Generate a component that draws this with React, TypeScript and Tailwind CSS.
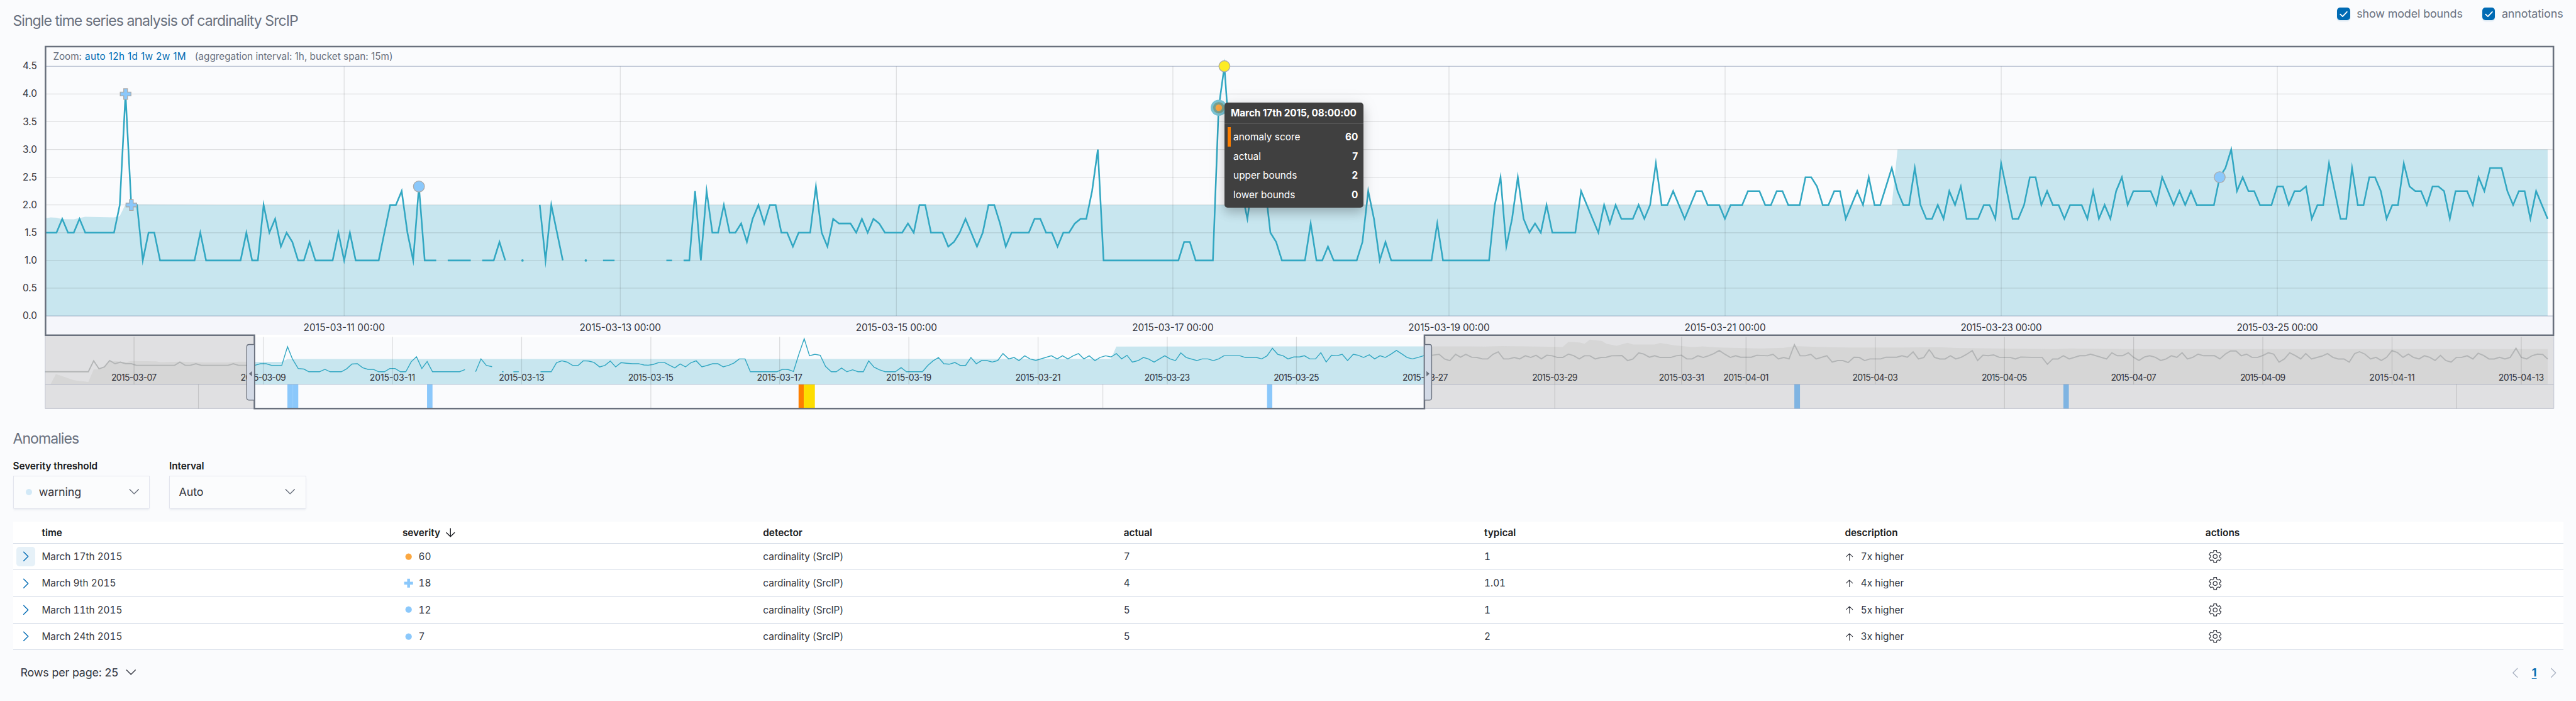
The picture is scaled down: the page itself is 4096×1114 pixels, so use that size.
import React from "react";

/* ---------- main chart data: [hour index, value, ...] per unbroken run ---------- */

const T = 1 / 3;
const RUNS: number[][] = [
  [0, 1.5, 2, 1.5, 3, 1.75, 4, 1.5, 5, 1.5, 6, 1.75, 7, 1.5, 12, 1.5, 13, 2, 14, 4, 15, 2, 16, 2, 17, 1, 18, 1.5, 19, 1.5, 20, 1, 26, 1, 27, 1.5, 28, 1, 34, 1, 35, 1.5, 36, 1, 37, 1, 38, 2, 39, 1.5, 40, 1.75, 41, 1.25, 42, 1.5, 43, 1 + T, 44, 1, 45, 1, 46, 1 + T, 47, 1, 50, 1, 51, 1.5, 52, 1, 53, 1.5, 54, 1, 58, 1, 59, 1.5, 60, 2, 61, 2, 62, 2.25, 63, 1.5, 64, 1, 65, 2 + T, 66, 1, 68, 1],
  [70, 1, 74, 1],
  [76, 1, 78, 1, 79, 1 + T, 80, 1],
  [86, 2, 87, 1, 88, 2, 89, 1.5, 90, 1],
  [97, 1, 99, 1],
  [108, 1, 109, 1],
  [111, 1, 112, 1, 113, 2.25, 114, 1, 115, 2.25, 116, 1.5, 117, 1.5, 118, 2, 119, 1.5, 120, 1.5, 121, 2 - T, 122, 1 + T, 123, 1.75, 124, 2, 125, 2 - T, 126, 2, 127, 2, 128, 1.5, 129, 1.5, 130, 1.25, 131, 1.5, 133, 1.5, 134, 2 + T, 135, 1.5, 136, 1.25, 137, 1.75, 138, 2 - T, 140, 2 - T, 141, 1.5, 142, 1.75, 143, 1.5, 144, 1.75, 145, 2 - T, 146, 1.5, 149, 1.5, 150, 2 - T, 151, 1.5, 152, 2, 153, 2, 154, 1.5, 156, 1.5, 157, 1.25, 158, 1 + T, 159, 1.5, 160, 1.75, 161, 1.5, 162, 1.25, 163, 1.5, 164, 2, 165, 2, 166, 2 - T, 167, 1.25, 168, 1.5, 171, 1.5, 172, 1.75, 173, 1.75, 174, 1.5, 175, 1.5, 176, 1.25, 177, 1.5, 178, 1.5, 179, 2 - T, 180, 1.75, 181, 1.75, 182, 2.25, 183, 3, 184, 1, 197, 1, 198, 1 + T, 199, 1 + T, 200, 1, 203, 1, 204, 3.75, 205, 4.5, 206, 3, 207, 2.75, 208, 2.25, 209, 1.75, 210, 2.5, 211, 2.5, 212, 2.4, 213, 1.5, 214, 1 + T, 215, 1, 219, 1, 220, 2 - T, 221, 1, 222, 1, 223, 1.25, 224, 1, 228, 1, 229, 1 + T, 230, 2.25, 231, 1.75, 232, 1, 233, 1 + T, 234, 1, 241, 1, 242, 2 - T, 243, 1, 251, 1, 252, 2, 253, 2.5, 254, 1.25, 255, 1.75, 256, 2.5, 257, 1.75, 258, 1.5, 259, 2 - T, 260, 1.5, 261, 2, 262, 1.5, 266, 1.5, 267, 2.25, 268, 2, 269, 1.75, 270, 1.5, 271, 2, 272, 2 - T, 273, 2, 274, 1.75, 276, 1.75, 277, 2, 278, 1.75, 279, 2, 280, 2.75, 281, 2, 282, 2, 283, 2.25, 284, 2, 285, 1.75, 286, 2, 287, 2.25, 288, 2.25, 289, 2, 291, 2, 292, 1.75, 293, 2, 295, 2, 296, 2.25, 298, 2.25, 299, 2, 300, 2, 301, 2.25, 302, 2.25, 303, 2, 305, 2, 306, 2.5, 307, 2.5, 308, 2 + T, 309, 2, 310, 2, 311, 2.25, 312, 2.25, 313, 1.75, 314, 2, 315, 2.25, 316, 2, 317, 2.5, 318, 2, 319, 2, 320, 2 + T, 321, 3 - T, 322, 2.25, 323, 2, 324, 2, 325, 3 - T, 326, 2, 327, 1.75, 328, 1.75, 329, 2, 330, 1.75, 331, 2.25, 332, 2, 333, 2 + T, 334, 1.75, 336, 1.75, 337, 2, 338, 2, 339, 1.75, 340, 2.75, 341, 2.25, 342, 1.75, 343, 1.75, 344, 2, 345, 2.5, 346, 2.5, 347, 2, 348, 2.25, 349, 2, 350, 2, 351, 1.75, 352, 2, 354, 2, 355, 1.75, 356, 2.25, 357, 1.75, 358, 2, 359, 1.75, 360, 2.25, 361, 2.5, 362, 2, 363, 2.25, 366, 2.25, 367, 2, 368, 2.5, 369, 2.25, 370, 2, 371, 2.25, 372, 2, 373, 2.25, 374, 2, 377, 2, 378, 2.5, 379, 3 - T, 380, 3, 381, 2.25, 382, 2.5, 383, 2.25, 384, 2.25, 385, 2, 387, 2, 388, 2 + T, 389, 2 + T, 390, 2, 391, 2.25, 392, 2.25, 393, 2 + T, 394, 1.75, 395, 2, 396, 2, 397, 2.75, 398, 2.25, 399, 1.75, 400, 1.75, 401, 3 - T, 402, 2, 403, 2, 404, 2.5, 405, 2.5, 406, 2.25, 407, 1.75, 408, 2, 409, 2, 410, 2.75, 411, 2 + T, 412, 2.25, 413, 2.25, 414, 2, 415, 2 + T, 416, 2 + T, 417, 2.25, 418, 1.75, 419, 2.25, 421, 2.25, 422, 2, 423, 2.5, 424, 2.25, 425, 3 - T, 427, 3 - T, 428, 2.25, 429, 2, 430, 2.25, 431, 2.25, 432, 1.75, 433, 2.25, 434, 2, 435, 1.75],
];
const DOTS = [83, 94];
const BOUNDS = [0, 1.76, 1, 1.775, 2, 1.77, 3, 1.745, 5, 1.742, 7, 1.788, 12, 1.775, 13, 1.8, 14, 2.01, 30, 2, 321, 2, 322, 3, 435, 3];

const X0 = 111.7;
const HOUR = 14.294;
const hx = (h: number) => X0 + h * HOUR;
const vy = (v: number) => 784 - v * 137.78;

const toPoints = (a: number[], fx: (n: number) => number, fy: (n: number) => number) => {
  const out: string[] = [];
  for (let i = 0; i < a.length; i += 2) out.push(`${fx(a[i]).toFixed(1)},${fy(a[i + 1]).toFixed(1)}`);
  return out.join(" ");
};

/* ---------- context chart data: four horizontal tiles ---------- */

type Tile = { ox: number; oy: number; sy: number };
const A: Tile = { ox: 0, oy: 0, sy: 1.5077 };
const B: Tile = { ox: 1600, oy: 100, sy: 1.6681 };
const C: Tile = { ox: 3200, oy: 100, sy: 1.6681 };
const D: Tile = { ox: 4800, oy: 0, sy: 1.5077 };
const tile = (t: Tile, a: number[]) => toPoints(a, (x) => t.ox + x / 0.98, (y) => t.oy + y / t.sy);

const CTX_A = [
  [110, 1391, 215, 1391, 228, 1350, 241, 1380, 254, 1373, 267, 1349, 280, 1361, 293, 1355, 306, 1361, 320, 1361, 332, 1367, 425, 1367, 438, 1355, 451, 1367, 463, 1367, 477, 1361, 490, 1367, 555, 1367, 568, 1361, 581, 1367, 620, 1367, 634, 1361, 648, 1361, 661, 1367, 686, 1367, 700, 1297, 712, 1343, 726, 1379, 740, 1381, 752, 1391, 778, 1391, 791, 1382, 804, 1391, 831, 1391, 844, 1380, 857, 1362, 870, 1361, 883, 1376, 896, 1382, 909, 1382, 922, 1391, 936, 1391, 949, 1379, 962, 1379, 975, 1391, 988, 1391, 1001, 1354, 1014, 1335, 1027, 1379, 1040, 1353, 1053, 1391, 1119, 1391, 1132, 1383],
  [1158, 1391, 1171, 1343, 1184, 1367, 1198, 1372],
  [1222, 1391, 1226, 1391],
  [1250, 1391, 1263, 1391],
];
const CTX_A2 = [1316, 1391, 1342, 1391, 1355, 1357, 1368, 1350, 1381, 1355, 1394, 1367, 1408, 1367, 1420, 1350, 1433, 1351, 1446, 1356, 1460, 1373, 1473, 1367, 1486, 1351, 1499, 1373, 1512, 1357, 1525, 1359, 1540, 1361, 1555, 1361];
const CTX_B = [0, 1344, 10, 1345, 22, 1342, 36, 1334, 50, 1334, 62, 1345, 75, 1356, 88, 1340, 101, 1352, 114, 1335, 127, 1327, 141, 1352, 154, 1346, 167, 1339, 180, 1339, 193, 1352, 207, 1345, 219, 1336, 232, 1319, 246, 1319, 259, 1372, 324, 1372, 337, 1362, 351, 1363, 364, 1371, 377, 1300, 390, 1235, 403, 1306, 416, 1300, 429, 1304, 442, 1350, 456, 1372, 468, 1372, 481, 1357, 494, 1372, 508, 1364, 521, 1372, 534, 1372, 547, 1327, 560, 1353, 573, 1364, 587, 1372, 612, 1372, 626, 1355, 639, 1372, 678, 1372, 691, 1346, 704, 1327, 717, 1313, 730, 1339, 743, 1341, 757, 1334, 770, 1346, 783, 1346, 796, 1313, 809, 1339, 822, 1326, 835, 1326, 848, 1332, 861, 1326, 874, 1297, 888, 1319, 901, 1313, 913, 1326, 927, 1306, 940, 1319, 954, 1325, 992, 1306, 1006, 1319, 1019, 1306, 1032, 1319, 1045, 1306, 1058, 1297, 1071, 1319, 1084, 1306, 1098, 1326, 1110, 1313, 1124, 1306, 1137, 1311, 1150, 1297, 1163, 1319, 1176, 1304, 1189, 1332, 1203, 1326, 1216, 1313, 1228, 1319, 1242, 1332, 1268, 1306, 1281, 1319, 1294, 1326, 1307, 1294, 1320, 1313, 1346, 1326, 1359, 1319, 1373, 1319, 1386, 1326, 1399, 1319, 1412, 1306, 1451, 1306, 1464, 1313, 1491, 1313, 1504, 1319, 1517, 1306, 1530, 1275, 1543, 1300, 1556, 1306];
const CTX_C = [0, 1319, 14, 1311, 28, 1311, 40, 1306, 53, 1319, 67, 1319, 80, 1293, 93, 1332, 106, 1304, 119, 1306, 132, 1300, 145, 1326, 159, 1300, 171, 1304, 184, 1313, 198, 1302, 211, 1319, 224, 1306, 237, 1313, 250, 1300, 264, 1284, 277, 1298, 290, 1313, 303, 1319, 316, 1313, 330, 1306, 350, 1304, 368, 1300, 381, 1319, 394, 1326, 408, 1300, 420, 1312, 433, 1300, 447, 1312, 460, 1313, 473, 1319, 486, 1319, 499, 1300, 512, 1290, 525, 1319, 538, 1319, 551, 1313, 564, 1319, 578, 1306, 591, 1313, 604, 1304, 617, 1319, 630, 1304, 643, 1306, 656, 1313, 669, 1313, 683, 1299, 696, 1306, 709, 1319, 722, 1306, 735, 1306, 748, 1319, 762, 1313, 775, 1312, 788, 1306, 813, 1305, 827, 1326, 840, 1319, 854, 1294, 866, 1299, 880, 1312, 893, 1306, 906, 1313, 932, 1313, 945, 1306, 958, 1304, 971, 1319, 984, 1319, 998, 1306, 1011, 1313, 1024, 1306, 1037, 1297, 1050, 1284, 1063, 1299, 1077, 1313, 1090, 1306, 1102, 1312, 1128, 1312, 1141, 1304, 1168, 1306, 1181, 1300, 1194, 1319, 1207, 1313, 1220, 1319, 1233, 1260, 1247, 1306, 1260, 1306, 1273, 1300, 1286, 1319, 1312, 1306, 1325, 1332, 1338, 1326, 1351, 1326, 1364, 1334, 1378, 1312, 1391, 1313, 1404, 1326, 1417, 1319, 1443, 1319, 1456, 1312, 1482, 1312, 1495, 1306, 1508, 1312, 1522, 1290, 1535, 1319, 1548, 1313, 1561, 1281];
const CTX_D = [0, 1322, 6, 1337, 19, 1343, 32, 1343, 45, 1331, 58, 1343, 71, 1337, 84, 1326, 98, 1312, 111, 1349, 124, 1329, 137, 1331, 150, 1328, 164, 1337, 190, 1337, 203, 1343, 216, 1336, 242, 1337, 268, 1337, 281, 1363, 294, 1343, 307, 1343, 320, 1331, 334, 1343, 360, 1331, 373, 1331, 386, 1325, 425, 1343, 438, 1320, 451, 1331, 464, 1331, 478, 1320, 491, 1337, 504, 1349, 517, 1336, 530, 1331, 544, 1337, 557, 1349, 570, 1343, 583, 1331, 596, 1337, 609, 1320, 622, 1343, 635, 1337, 648, 1325, 661, 1331, 688, 1331, 701, 1343, 714, 1325, 727, 1313, 740, 1313, 753, 1331, 766, 1325, 779, 1337, 793, 1337, 806, 1330, 819, 1320, 832, 1325, 845, 1355, 858, 1343, 871, 1320, 884, 1330, 898, 1343, 910, 1323, 924, 1343, 950, 1332, 963, 1323, 976, 1337, 989, 1343, 1003, 1343, 1016, 1355, 1029, 1323, 1041, 1316, 1054, 1325, 1068, 1343, 1081, 1337, 1094, 1349, 1107, 1337, 1120, 1312, 1133, 1319, 1147, 1337, 1160, 1325, 1172, 1337, 1186, 1343, 1199, 1331, 1212, 1337, 1225, 1349, 1238, 1330, 1251, 1349, 1264, 1355, 1277, 1337, 1290, 1337, 1303, 1331, 1317, 1343, 1330, 1322, 1343, 1330, 1356, 1343, 1369, 1343, 1382, 1337, 1395, 1343, 1408, 1337, 1422, 1303, 1435, 1337, 1448, 1343, 1461, 1331, 1474, 1325, 1487, 1326, 1499, 1343];
const CTX_REST = [tile(A, CTX_A2), tile(B, CTX_B), tile(C, CTX_C), tile(D, CTX_D)].join(" ");
const CTX_LINES = [...CTX_A.map((a) => tile(A, a)), CTX_REST];

const CTX_AREA = [
  tile(A, [110, 1438, 123, 1438, 136, 1400, 150, 1407, 180, 1423, 215, 1429, 228, 1382, 241, 1382, 254, 1376, 267, 1352, 280, 1351, 306, 1355, 320, 1351, 380, 1352, 390, 1355, 440, 1353, 500, 1356, 555, 1356, 581, 1353, 620, 1354, 686, 1354, 700, 1343]),
  tile(B, [1137, 1319, 1150, 1268]),
  tile(C, [350, 1267, 440, 1267, 480, 1268, 520, 1266, 580, 1267, 669, 1269, 683, 1248, 710, 1251, 722, 1256, 735, 1239, 765, 1245, 775, 1256, 800, 1265, 827, 1252, 840, 1259, 893, 1259, 906, 1253, 940, 1263, 984, 1270, 1010, 1267, 1050, 1272, 1100, 1274, 1155, 1276, 1207, 1273, 1233, 1266, 1300, 1270, 1364, 1272, 1500, 1272]),
  tile(D, [0, 1299, 20, 1299, 60, 1302, 150, 1304, 300, 1306, 340, 1304, 500, 1306, 1499, 1306]),
  "6329.6,954",
].join(" ");

const MAIN_TICKS: [number, string][] = [
  [855, "2015-03-11 00:00"],
  [1541, "2015-03-13 00:00"],
  [2227, "2015-03-15 00:00"],
  [2914, "2015-03-17 00:00"],
  [3600, "2015-03-19 00:00"],
  [4286, "2015-03-21 00:00"],
  [4972, "2015-03-23 00:00"],
  [5658, "2015-03-25 00:00"],
];
const CTX_TICKS: [number, string][] = [
  [333, "2015-03-07"],
  [654, "2015-03-09"],
  [975, "2015-03-11"],
  [1296, "2015-03-13"],
  [1617, "2015-03-15"],
  [1937, "2015-03-17"],
  [2258, "2015-03-19"],
  [2579, "2015-03-21"],
  [2900, "2015-03-23"],
  [3221, "2015-03-25"],
  [3541, "2015-03-27"],
  [3863, "2015-03-29"],
  [4178, "2015-03-31"],
  [4338, "2015-04-01"],
  [4659, "2015-04-03"],
  [4980, "2015-04-05"],
  [5301, "2015-04-07"],
  [5622, "2015-04-09"],
  [5943, "2015-04-11"],
  [6264, "2015-04-13"],
];
const LANE_TICKS = [493, 1617, 2740, 3863, 4980, 6103];
const Y_TICKS = ["0.0", "0.5", "1.0", "1.5", "2.0", "2.5", "3.0", "3.5", "4.0", "4.5"];

const FRAME = "#69707D";
const TEAL = "#32A7C2";

function CrossMark({ x, y }: { x: number; y: number }) {
  return (
    <path
      transform={`translate(${x} ${y})`}
      d="M-4.7 -13.3H4.7V-4.7H13.3V4.7H4.7V13.3H-4.7V4.7H-13.3V-4.7H-4.7Z"
      fill="#8BC8FB"
      stroke="#AAAAAA"
      strokeWidth="2"
    />
  );
}

function Charts() {
  return (
    <svg className="block h-[581.12px] w-[4096px]" viewBox="0 112 6400 908" fontFamily="Inter, sans-serif">
      {/* focus chart */}
      <rect x="112" y="784" width="6234" height="48" fill="#F5F6FB" />
      <polygon points={`${toPoints(BOUNDS, hx, vy)} ${hx(435)},784 ${hx(0)},784`} fill="#C8E6EF" />
      <g stroke="#000000" strokeOpacity="0.11" strokeWidth="2">
        {Y_TICKS.slice(1, 9).map((t) => (
          <line key={t} x1="112" x2="6344" y1={vy(+t)} y2={vy(+t)} />
        ))}
        {MAIN_TICKS.map(([x]) => (
          <line key={x} x1={x} x2={x} y1="164" y2="784" />
        ))}
      </g>
      <path d="M112 164H6344M112 784H6344" stroke="#69779B" strokeOpacity="0.45" strokeWidth="2" />
      <g fill="none" stroke={TEAL} strokeWidth="4">
        {RUNS.map((r, i) => (
          <polyline key={i} points={toPoints(r, hx, vy)} strokeMiterlimit="10" />
        ))}
      </g>
      {DOTS.map((h) => (
        <circle key={h} cx={hx(h)} cy={vy(1)} r="3" fill={TEAL} />
      ))}
      <CrossMark x={312} y={233} />
      <CrossMark x={326.3} y={508.5} />
      <g stroke="#AAAAAA" strokeWidth="2">
        <circle cx={hx(65)} cy="462.5" r="13.7" fill="#8BC8FB" />
        <circle cx={hx(378)} cy="439.5" r="13.7" fill="#8BC8FB" />
        <circle cx="3042" cy="164" r="13.7" fill="#FDEC25" />
      </g>
      <circle cx="3028" cy="267" r="20" fill="#79C3D4" />
      <circle cx="3028" cy="267" r="14" fill="#78A08F" />
      <circle cx="3028" cy="267" r="8.2" fill="#FAA541" />

      <g fontSize="24" fill="#343741" textAnchor="end">
        {Y_TICKS.map((t) => (
          <text key={t} x="92" y={vy(+t) + 8}>
            {t}
          </text>
        ))}
      </g>
      <g fontSize="24" fill="#343741" textAnchor="middle">
        {MAIN_TICKS.map(([x, t]) => (
          <text key={t} x={x} y="821" textLength="202" lengthAdjust="spacing">
            {t}
          </text>
        ))}
      </g>
      <g fontSize="24">
        <text x="132" y="147.500" fill="#69707D" textLength="71">Zoom:</text>
        <text x="211" y="147.500" fill="#006BB4" textLength="251">auto 12h 1d 1w 2w 1M</text>
        <text x="484" y="147.500" fill="#69707D" textLength="492">(aggregation interval: 1h, bucket span: 15m)</text>
      </g>

      {/* context chart */}
      <rect x="112" y="831" width="6233" height="6" fill="#FFFFFF" />
      <polygon points={CTX_AREA} fill="#C8E6EF" />
      <g fill="none" stroke={TEAL} strokeWidth="2.200">
        {CTX_LINES.map((p, i) => (
          <polyline key={i} points={p} />
        ))}
      </g>
      <path d="M714 954H741V1014H714ZM1061 954H1074.500V1014H1061ZM3148 954H3161V1014H3148ZM4458 954H4472V1014H4458ZM5126.500 954H5140V1014H5126.500Z" fill="#8BC8FB" />
      <path d="M727.500 954V1014" stroke="#A6D5FC" strokeWidth="1" />
      <rect x="1984" y="954" width="13" height="60" fill="#FE7F00" />
      <rect x="1997" y="954" width="27.500" height="60" fill="#FDDD00" />

      {/* unselected ranges */}
      {[
        [112, 518],
        [3541, 2804],
      ].map(([x, w], i) => (
        <g key={i}>
          <clipPath id={`range-${i}`}>
            <rect x={x} y="832" width={w} height="183" />
          </clipPath>
          <g clipPath={`url(#range-${i})`}>
            <rect x={x} y="832" width={w} height="183" fill="#E0E0E2" />
            <polygon points={CTX_AREA} fill="#D6D6D6" />
            <g fill="none" stroke="#B3B5B6" strokeWidth="3">
              {CTX_LINES.map((p, k) => (
                <polyline key={k} points={p} />
              ))}
            </g>
            <path d="M4458 954H4472V1014H4458ZM5126.500 954H5140V1014H5126.500Z" fill="#7FB4E2" />
          </g>
        </g>
      ))}
      <g stroke="#000000" strokeOpacity="0.12" strokeWidth="2">
        {CTX_TICKS.map(([x]) => (
          <line key={x} x1={x} x2={x} y1="836" y2="954" />
        ))}
        {LANE_TICKS.map((x) => (
          <line key={x} x1={x} x2={x} y1="954" y2="1014" />
        ))}
      </g>
      <path d="M112 954H6345M112 1014H6345M112 834V1014M6345 834V1014" fill="none" stroke="#69779B" strokeOpacity="0.3" strokeWidth="1.800" />
      <g fontSize="22" fill="#343741" textAnchor="middle">
        {CTX_TICKS.map(([x, t]) => (
          <text key={t} x={x} y="944.500" textLength="113" lengthAdjust="spacing">
            {t}
          </text>
        ))}
      </g>

      {/* brush outline joined to the focus chart frame */}
      <path d="M113 832V115H6344V832H3539V1014H632V832H111" fill="none" stroke={FRAME} strokeWidth="4" />
      <g fill="#D3DAE6" stroke={FRAME} strokeWidth="2">
        <path d="M631 855H619Q613 855 613 861V987Q613 993 619 993H631" />
        <path d="M3540 855H3551Q3557 855 3557 861V987Q3557 993 3551 993H3540" />
      </g>
      <path d="M626 921V934L618.500 927.500ZM3544 921V934L3551.500 927.500Z" fill={FRAME} />
    </svg>
  );
}

function Tooltip() {
  const rows = [
    ["anomaly score", "60"],
    ["actual", "7"],
    ["upper bounds", "2"],
    ["lower bounds", "0"],
  ];
  return (
    <div className="absolute left-[1946.9px] top-[90.9px] h-[167.7px] w-[221.4px] overflow-visible rounded-[5px] bg-[#404040] text-[15.36px] text-white shadow-[0_8px_16px_rgba(0,0,0,0.2),0_2px_30px_rgba(0,0,0,0.08)]">
      <div className="flex h-[34.6px] items-center whitespace-nowrap border-b border-[#595959] pl-[10.2px] pb-[2px] pt-[2px] font-bold tracking-[-0.1px]">
        March 17th 2015, 08:00:00
      </div>
      <div className="pt-[5px]">
        {rows.map(([k, v], i) => (
          <div key={k} className="flex h-[30.72px] items-center pl-[5.1px] pr-[9px]">
            <span className={i === 0 ? "h-full w-[5.1px] bg-[#FE7F00]" : "h-full w-[5.1px]"} />
            <span className="ml-[4px] flex-1">{k}</span>
            <span className="font-bold">{v}</span>
          </div>
        ))}
      </div>
    </div>
  );
}

function Checkbox({ label }: { label: string }) {
  return (
    <label className="flex items-center gap-[10.5px]">
      <span className="flex size-[20.5px] items-center justify-center rounded-[5px] bg-[#006BB4] shadow-[0_2px_2px_rgba(0,107,180,0.12)]">
        <svg className="size-[13px]" viewBox="0 0 13 13" fill="none" stroke="#fff" strokeWidth="1.800" strokeLinecap="round" strokeLinejoin="round">
          <path d="M1.200 6.700L4.900 10.100L11.800 2.800" />
        </svg>
      </span>
      <span>{label}</span>
    </label>
  );
}

type Dir = "down" | "right" | "left";
function Chevron({ dir, className }: { dir: Dir; className: string }) {
  const d =
    dir === "down"
      ? "M2.500 4.500L8 9.900L13.500 4.500"
      : dir === "right"
        ? "M5.200 2.500L10.700 8L5.200 13.500"
        : "M10.800 2.500L5.300 8L10.800 13.500";
  return (
    <svg className={className} viewBox="0 0 16 16" fill="none" stroke="currentColor" strokeWidth="1.100" strokeLinecap="round" strokeLinejoin="round">
      <path d={d} />
    </svg>
  );
}

function Arrow({ up, className }: { up?: boolean; className: string }) {
  return (
    <svg className={className} viewBox="0 0 16 16" fill="none" stroke="currentColor" strokeWidth="1.100" strokeLinecap="round" strokeLinejoin="round">
      <path d={up ? "M8 14V3M2.800 8L8 3L13.200 8" : "M8 3V13M3 8.200L8 13L13 8.200"} />
    </svg>
  );
}

const GEAR = (() => {
  const pts: string[] = [];
  for (let k = 0; k < 6; k++) {
    for (const [r, a] of [[11.5, -19], [15.4, -13.5], [15.4, 13.5], [11.5, 19]]) {
      const t = ((k * 60 - 90 + a) * Math.PI) / 180;
      pts.push(`${(16 + r * Math.cos(t)).toFixed(2)},${(16 + r * Math.sin(t)).toFixed(2)}`);
    }
  }
  return pts.join(" ");
})();

function Gear() {
  return (
    <svg className="ml-[5px] size-[20.5px] overflow-visible" viewBox="0 0 32 32" fill="none" stroke="#343741" strokeWidth="1.900" strokeLinejoin="round">
      <polygon points={GEAR} />
      <circle cx="16" cy="16" r="5" />
    </svg>
  );
}

function Select({ label, value, dot }: { label: string; value: string; dot?: boolean }) {
  return (
    <div className="w-[217.6px]">
      <div className="h-5 text-[15.36px] font-semibold leading-[21px] tracking-[-0.08px] text-[#1A1C21]">{label}</div>
      <div className="mt-[6.7px] flex h-[51.2px] items-center border border-[#E3E5EE] bg-[#FBFCFD] pl-[14.4px] pr-[14px] text-[17.92px] tracking-[-0.1px] shadow-[0_3px_3px_-1px_rgba(152,162,179,0.2)]">
        {dot && <span className="ml-[5px] mr-[10.5px] size-[10.3px] rounded-full bg-[#D2E9F7]" />}
        <span className="flex-1">{value}</span>
        <Chevron dir="down" className="size-[20.5px] text-[#69707D]" />
      </div>
    </div>
  );
}

const ROWS = [
  { time: "March 17th 2015", sev: "60", mark: "orange", actual: "7", typical: "1", desc: "7x higher" },
  { time: "March 9th 2015", sev: "18", mark: "cross", actual: "4", typical: "1.01", desc: "4x higher" },
  { time: "March 11th 2015", sev: "12", mark: "blue", actual: "5", typical: "1", desc: "5x higher" },
  { time: "March 24th 2015", sev: "7", mark: "blue", actual: "5", typical: "2", desc: "3x higher" },
];

function Mark({ kind }: { kind: string }) {
  return (
    <svg className="mx-[2.6px] size-[15.4px]" viewBox="0 0 24 24">
      {kind === "cross" ? (
        <path d="M8.500 1H15.500V8.500H23V15.500H15.500V23H8.500V15.500H1V8.500H8.500Z" fill="#8BC8FB" />
      ) : (
        <circle cx="12" cy="12" r="8" fill={kind === "orange" ? "#FBA740" : "#8BC8FB"} />
      )}
    </svg>
  );
}

export default function App() {
  return (
    <div className="flex h-[1114px] w-[4096px] flex-col overflow-hidden bg-[#FAFBFD] font-['Inter',sans-serif] text-[#343741]">
      <header className="flex h-[71.7px] items-start justify-between pl-[20.5px] pr-[20.5px]">
        <h1 className="mt-[16px] text-[23.04px] font-normal leading-[34px] tracking-[-0.95px] text-[#69707D]">
          Single time series analysis of cardinality SrcIP
        </h1>
        <div className="flex gap-[31.2px] pt-[8px] text-[17.92px] leading-7 tracking-[-0.12px] text-[#69707D]">
          <Checkbox label="show model bounds" />
          <Checkbox label="annotations" />
        </div>
      </header>

      <section className="relative">
        <Charts />
        <Tooltip />
      </section>

      <section className="px-[20.5px] pt-[26px]">
        <h2 className="h-9 text-[23.04px] font-normal leading-[37px] tracking-[-0.95px] text-[#69707D]">Anomalies</h2>
        <div className="mt-[15px] flex gap-[31px]">
          <Select label="Severity threshold" value="warning" dot />
          <Select label="Interval" value="Auto" />
        </div>

        <div className="mt-[21.8px] bg-white text-[15.36px] tabular-nums">
          <div className="grid h-[34.56px] grid-cols-[41px_repeat(7,minmax(0,573.4px))] items-center border-b-[1.3px] border-[#D3DAE6] font-semibold text-[#1A1C21]">
            <span />
            <span className="pl-[5px]">time</span>
            <span className="flex items-center gap-[5.5px] pl-[5px]">
              severity
              <Arrow className="size-[20.5px]" />
            </span>
            <span className="pl-[5px]">detector</span>
            <span className="pl-[5px]">actual</span>
            <span className="pl-[5px]">typical</span>
            <span className="pl-[5px]">description</span>
            <span className="pl-[5px]">actions</span>
          </div>
          {ROWS.map((r, i) => (
            <div key={r.time} className="grid h-[42.24px] grid-cols-[41px_repeat(7,minmax(0,573.4px))] items-center border-b-[1.3px] border-[#D3DAE6]">
              <span
                className={
                  i === 0
                    ? "ml-[5px] flex size-[30.7px] items-center justify-center rounded-[5px] bg-[#E6F1F8]"
                    : "ml-[5px] flex size-[30.7px] items-center justify-center"
                }
              >
                <Chevron dir="right" className="size-[20.5px] text-[#006BB4]" />
              </span>
              <span className="pl-[5px]">{r.time}</span>
              <span className="flex items-center pl-[5px]">
                <Mark kind={r.mark} />
                <span className="ml-[5px]">{r.sev}</span>
              </span>
              <span className="pl-[5px] tracking-[-0.08px]">cardinality (SrcIP)</span>
              <span className="pl-[5px]">{r.actual}</span>
              <span className="pl-[5px]">{r.typical}</span>
              <span className="flex items-center pl-[5px]">
                <Arrow up className="mr-[10px] size-[15.4px]" />
                {r.desc}
              </span>
              <span className="pl-[5px]">
                <Gear />
              </span>
            </div>
          ))}
        </div>

        <footer className="flex h-[73.5px] items-center justify-between pl-[12px] pr-[5px] text-[17.92px]">
          <span className="flex items-center gap-[12.500px] tracking-[-0.18px]">
            Rows per page: 25
            <Chevron dir="down" className="-ml-[3px] size-[20.5px]" />
          </span>
          <span className="flex items-center">
            <Chevron dir="left" className="size-[20.5px] text-[#ABB4C4]" />
            <span className="mx-[16.5px] font-bold text-[#006BB4] underline underline-offset-[3px]">1</span>
            <Chevron dir="right" className="size-[20.5px] text-[#ABB4C4]" />
          </span>
        </footer>
      </section>
    </div>
  );
}
